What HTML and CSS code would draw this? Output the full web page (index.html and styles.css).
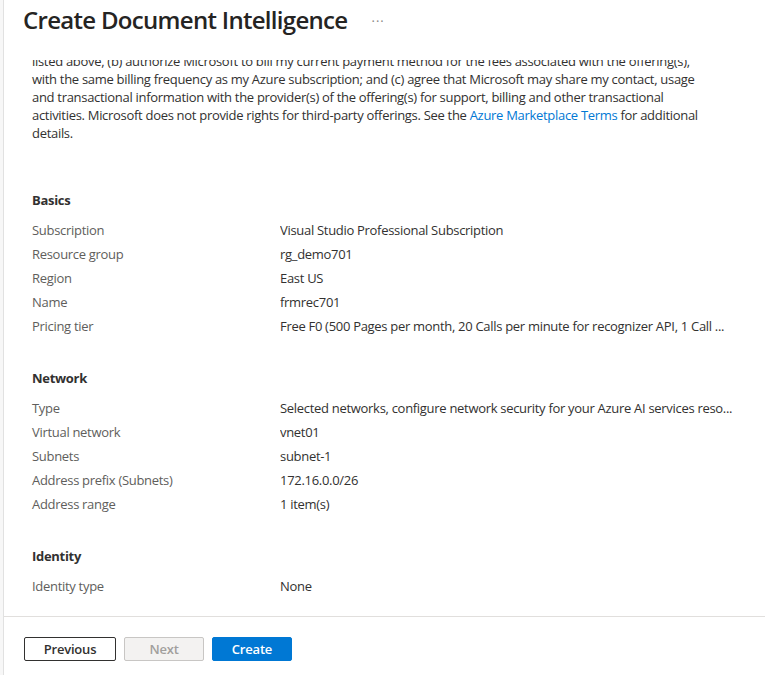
FILE: index.html
```html
<!DOCTYPE html>
<html lang="en">
<head>
<meta charset="utf-8">
<title>Create Document Intelligence</title>
<link rel="stylesheet" href="styles.css">
</head>
<body>
<div class="blade">
  <header class="blade-header">
    <h1 class="blade-title">Create Document Intelligence</h1>
    <button class="more" aria-label="More">&middot;&middot;&middot;</button>
  </header>
  <main class="blade-content">
    <p class="terms">listed above, (b) authorize Microsoft to bill my current payment method for the fees associated with the offering(s),<br>with the same billing frequency as my Azure subscription; and (c) agree that Microsoft may share my contact, usage<br>and transactional information with the provider(s) of the offering(s) for support, billing and other transactional<br>activities. Microsoft does not provide rights for third-party offerings. See the <a href="#" class="link">Azure Marketplace Terms</a> for additional<br>details.</p>

    <section class="section first">
      <h2 class="section-title">Basics</h2>
      <dl class="props">
        <dt>Subscription</dt><dd>Visual Studio Professional Subscription</dd>
        <dt>Resource group</dt><dd>rg_demo701</dd>
        <dt>Region</dt><dd>East US</dd>
        <dt>Name</dt><dd>frmrec701</dd>
        <dt>Pricing tier</dt><dd>Free F0 (500 Pages per month, 20 Calls per minute for recognizer API, 1 Call ...</dd>
      </dl>
    </section>

    <section class="section">
      <h2 class="section-title">Network</h2>
      <dl class="props">
        <dt>Type</dt><dd>Selected networks, configure network security for your Azure AI services reso...</dd>
        <dt>Virtual network</dt><dd>vnet01</dd>
        <dt>Subnets</dt><dd>subnet-1</dd>
        <dt>Address prefix (Subnets)</dt><dd>172.16.0.0/26</dd>
        <dt>Address range</dt><dd>1 item(s)</dd>
      </dl>
    </section>

    <section class="section">
      <h2 class="section-title">Identity</h2>
      <dl class="props">
        <dt>Identity type</dt><dd>None</dd>
      </dl>
    </section>
  </main>
  <footer class="blade-footer">
    <button class="btn btn-default">Previous</button>
    <button class="btn btn-disabled" disabled>Next</button>
    <button class="btn btn-primary">Create</button>
  </footer>
</div>
</body>
</html>
```

FILE: styles.css
```css
* { box-sizing: border-box; }

html, body {
  margin: 0;
  padding: 0;
  height: 100%;
}

body {
  background: #f7f7f7;
  font-family: "Segoe UI", "Open Sans", "Noto Sans", sans-serif;
  color: #323130;
  font-size: 13px;
  letter-spacing: -0.3px;
}

.blade {
  margin-left: 3px;
  height: 675px;
  border-left: 1px solid #e1e1e1;
  background: #ffffff;
  display: flex;
  flex-direction: column;
}

.blade-header {
  height: 60px;
  flex: none;
  display: flex;
  align-items: flex-start;
  padding: 4px 0 0 19px;
  gap: 24px;
}

.blade-title {
  margin: 0;
  font-size: 24px;
  font-weight: 600;
  letter-spacing: -0.7px;
  line-height: 32px;
  color: #252423;
  white-space: nowrap;
}

.more {
  border: none;
  background: none;
  padding: 0;
  margin-top: 7px;
  font-size: 13px;
  letter-spacing: 1px;
  color: #8a8886;
  font-family: inherit;
  line-height: 20px;
}

.blade-content {
  flex: 1;
  overflow: hidden;
  padding: 0 28px;
}

.terms {
  margin: -8px 0 0;
  line-height: 18px;
  white-space: nowrap;
}

.link {
  color: #0078d4;
  text-decoration: none;
}

.section {
  margin-top: 31px;
}

.section.first {
  margin-top: 49px;
}

.section-title {
  margin: 0 0 9px;
  font-size: 13px;
  font-weight: 700;
  line-height: 18px;
}

.props {
  margin: 0;
  display: grid;
  grid-template-columns: 248px minmax(0, 458px);
  line-height: 24px;
}

.props dt {
  color: #605e5c;
}

.props dd {
  margin: 0;
  white-space: nowrap;
  overflow: hidden;
  text-overflow: ellipsis;
}

.blade-footer {
  flex: none;
  height: 59px;
  border-top: 1px solid #e1dfdd;
  display: flex;
  gap: 8px;
  padding: 20px 0 0 20px;
  align-items: flex-start;
}

.btn {
  height: 24px;
  font-family: inherit;
  font-size: 13px;
  font-weight: 600;
  letter-spacing: -0.2px;
  border-radius: 2px;
  padding: 0;
  line-height: 20px;
  width: 80px;
}

.btn-default {
  width: 92px;
  background: #ffffff;
  border: 1px solid #323130;
  color: #323130;
}

.btn-disabled {
  background: #f3f2f1;
  border: 1px solid #c8c6c4;
  color: #a19f9d;
}

.btn-primary {
  background: #0078d4;
  border: 1px solid #0078d4;
  color: #ffffff;
}
```
